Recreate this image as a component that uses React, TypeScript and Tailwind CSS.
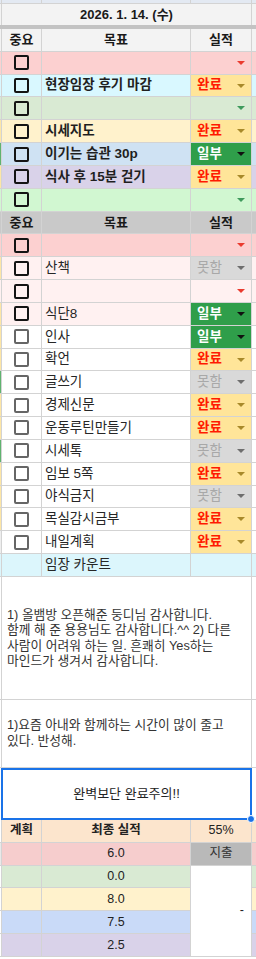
import React from 'react';

type Mark = 'done' | 'part' | 'miss' | 'red' | 'green' | 'none';

type Goal = {
  text: string;
  bg: string;
  edge: string;
  box: 'dark' | 'gray' | 'none';
  mark: Mark;
};

const FONT = "font-['Liberation_Sans','Noto_Sans_CJK_KR',sans-serif]";

const firstGoals: Goal[] = [
  { text: '', bg: 'bg-[#fcd0d0]', edge: 'bg-[#fcd0d0]', box: 'dark', mark: 'red' },
  { text: '현장임장 후기 마감', bg: 'bg-[#d9f8ff]', edge: 'bg-[#d9f8ff]', box: 'dark', mark: 'done' },
  { text: '', bg: 'bg-[#d9ead3]', edge: 'bg-[#d9ead3]', box: 'dark', mark: 'green' },
  { text: '시세지도', bg: 'bg-[#fff2cc]', edge: 'bg-[#fde6a6]', box: 'dark', mark: 'done' },
  { text: '이기는 습관 30p', bg: 'bg-[#cfe2f3]', edge: 'bg-[#5fb36f]', box: 'dark', mark: 'part' },
  { text: '식사 후 15분 걷기', bg: 'bg-[#d9d2e9]', edge: 'bg-[#fde6a6]', box: 'dark', mark: 'done' },
  { text: '', bg: 'bg-[#d1f7d1]', edge: 'bg-[#d1f7d1]', box: 'dark', mark: 'green' },
];

const secondGoals: Goal[] = [
  { text: '', bg: 'bg-[#fcd0d0]', edge: 'bg-[#fcd0d0]', box: 'dark', mark: 'red' },
  { text: '산책', bg: 'bg-[#fff1f1]', edge: 'bg-[#fde6a6]', box: 'dark', mark: 'miss' },
  { text: '', bg: 'bg-[#fff1f1]', edge: 'bg-[#fff1f1]', box: 'dark', mark: 'red' },
  { text: '식단8', bg: 'bg-[#fff1f1]', edge: 'bg-[#fde6a6]', box: 'dark', mark: 'part' },
  { text: '인사', bg: 'bg-white', edge: 'bg-[#fde6a6]', box: 'gray', mark: 'part' },
  { text: '확언', bg: 'bg-white', edge: 'bg-[#fde6a6]', box: 'gray', mark: 'done' },
  { text: '글쓰기', bg: 'bg-white', edge: 'bg-[#5fb36f]', box: 'gray', mark: 'miss' },
  { text: '경제신문', bg: 'bg-white', edge: 'bg-[#fde6a6]', box: 'gray', mark: 'done' },
  { text: '운동루틴만들기', bg: 'bg-white', edge: 'bg-[#fde6a6]', box: 'gray', mark: 'done' },
  { text: '시세톡', bg: 'bg-white', edge: 'bg-[#5fb36f]', box: 'gray', mark: 'miss' },
  { text: '임보 5쪽', bg: 'bg-white', edge: 'bg-[#fde6a6]', box: 'gray', mark: 'done' },
  { text: '야식금지', bg: 'bg-white', edge: 'bg-[#fde6a6]', box: 'gray', mark: 'miss' },
  { text: '목실감시금부', bg: 'bg-white', edge: 'bg-[#fde6a6]', box: 'gray', mark: 'done' },
  { text: '내일계획', bg: 'bg-white', edge: 'bg-[#eeeeee]', box: 'gray', mark: 'done' },
  { text: '임장 카운트', bg: 'bg-[#dcf6fc]', edge: 'bg-[#dcf6fc]', box: 'none', mark: 'none' },
];

const results = [
  { value: '6.0', bg: 'bg-[#f6cdcd]' },
  { value: '0.0', bg: 'bg-[#d9ead3]' },
  { value: '8.0', bg: 'bg-[#fff2cc]' },
  { value: '7.5', bg: 'bg-[#c9daf8]' },
  { value: '2.5', bg: 'bg-[#d9d2e9]' },
];

function Arrow({ color }: { color: string }) {
  return (
    <svg width="8" height="4" viewBox="0 0 8 4" className={color}>
      <path d="M0 0h8L4 4z" fill="currentColor" />
    </svg>
  );
}

function StatusCell({ mark, bg }: { mark: Mark; bg: string }) {
  const base = 'w-[61px] h-full border-r border-[#d3d3d3] flex items-center justify-between pl-[6px] pr-[6px]';
  if (mark === 'done') {
    return (
      <div className={`${base} bg-[#ffe599]`}>
        <span className="text-[13.5px] font-bold text-[#ff1a00]">완료</span>
        <Arrow color="text-[#a8892a]" />
      </div>
    );
  }
  if (mark === 'part') {
    return (
      <div className={`${base} bg-[#2f9e4a]`}>
        <span className="text-[13.5px] font-bold text-white">일부</span>
        <Arrow color="text-[#111111]" />
      </div>
    );
  }
  if (mark === 'miss') {
    return (
      <div className={`${base} bg-[#d9d9d9]`}>
        <span className="text-[13.5px] text-[#a8a8a8]">못함</span>
        <Arrow color="text-[#6e6e6e]" />
      </div>
    );
  }
  if (mark === 'red') {
    return (
      <div className={`${base} ${bg} justify-end`}>
        <Arrow color="text-[#ea3b2e]" />
      </div>
    );
  }
  if (mark === 'green') {
    return (
      <div className={`${base} ${bg} justify-end`}>
        <Arrow color="text-[#3f9a5c]" />
      </div>
    );
  }
  return <div className={`${base} ${bg}`} />;
}

function GoalRow({ goal, bold }: { goal: Goal; bold: boolean }) {
  return (
    <div className="flex h-[22.83px] border-b border-[#d3d3d3]">
      <div className={`w-[1px] h-full ${goal.edge}`} />
      <div className={`w-[41px] h-full border-x border-[#d3d3d3] flex items-center justify-center ${goal.bg}`}>
        {goal.box === 'dark' && <div className="w-[15px] h-[15px] border-[2.5px] border-[#141414] rounded-[2px]" />}
        {goal.box === 'gray' && <div className="w-[15px] h-[15px] border-2 border-[#666666] rounded-[2px]" />}
      </div>
      <div className={`w-[149px] h-full border-r border-[#d3d3d3] flex items-center pl-[3px] text-[13.5px] ${goal.bg} ${bold ? 'font-bold text-[#1f1f1f]' : 'text-[#262626]'}`}>
        {goal.text}
      </div>
      <StatusCell mark={goal.mark} bg={goal.bg} />
      <div className={`w-[4px] h-full ${goal.bg}`} />
    </div>
  );
}

function HeaderRow({ bg }: { bg: string }) {
  return (
    <div className="flex h-[22.83px] border-b border-[#d3d3d3] text-[13px] font-bold text-[#1a1a1a]">
      <div className={`w-[1px] h-full ${bg}`} />
      <div className={`w-[41px] h-full border-x border-[#d3d3d3] flex items-center justify-center ${bg}`}>중요</div>
      <div className={`w-[149px] h-full border-r border-[#d3d3d3] flex items-center justify-center ${bg}`}>목표</div>
      <div className={`w-[61px] h-full border-r border-[#d3d3d3] flex items-center justify-center ${bg}`}>실적</div>
      <div className={`w-[4px] h-full ${bg}`} />
    </div>
  );
}

export default function App() {
  return (
    <div className={`w-[256px] h-[959px] bg-white overflow-hidden ${FONT}`}>
      {/* previous row peeking in */}
      <div className="flex h-[4px] border-b border-[#d3d3d3] bg-[#e3e9f2]">
        <div className="w-[1px]" />
        <div className="w-[41px] border-x border-[#d3d3d3]" />
        <div className="w-[149px] border-r border-[#d3d3d3]" />
        <div className="w-[61px] border-r border-[#d3d3d3]" />
        <div className="w-[4px]" />
      </div>

      {/* date */}
      <div className="flex h-[21px] bg-[#f3f3f3]">
        <div className="w-[1px]" />
        <div className="w-[251px] border-x border-[#d3d3d3] flex items-center justify-center text-[13px] font-bold text-[#1a1a1a]">
          2026. 1. 14. (수)
        </div>
        <div className="w-[4px]" />
      </div>
      <div className="h-[4px] bg-[#c3c3c3]" />

      <HeaderRow bg="bg-[#f3f3f3]" />
      {firstGoals.map((g, i) => (
        <GoalRow key={i} goal={g} bold />
      ))}

      <HeaderRow bg="bg-[#c9c9c9]" />
      {secondGoals.map((g, i) => (
        <GoalRow key={i} goal={g} bold={false} />
      ))}

      {/* gratitude notes */}
      <div className="flex h-[123px] border-b border-[#d3d3d3]">
        <div className="w-[1px]" />
        <div className="w-[251px] border-x border-[#d3d3d3] flex flex-col justify-center pl-[5px] text-[12.75px] leading-[15.5px] text-[#333333]">
          <span>1) 올뱀방 오픈해준 둥디님 감사합니다.</span>
          <span>함께 해 준 용용님도 감사합니다.^^ 2) 다른</span>
          <span>사람이 어려워 하는 일. 흔쾌히 Yes하는</span>
          <span>마인드가 생겨서 감사합니다.</span>
        </div>
        <div className="w-[4px]" />
      </div>
      <div className="flex h-[68px] border-b border-[#d3d3d3]">
        <div className="w-[1px]" />
        <div className="w-[251px] border-x border-[#d3d3d3] flex flex-col justify-center pl-[5px] text-[12.75px] leading-[16px] text-[#333333]">
          <span>1)요즘 아내와 함께하는 시간이 많이 줄고</span>
          <span>있다. 반성해.</span>
        </div>
        <div className="w-[4px]" />
      </div>

      {/* motto (selected cell) */}
      <div className="flex h-[52px]">
        <div className="w-[1px]" />
        <div className="relative w-[251px] border-2 border-[#1a73e8] flex items-center justify-center text-[13px] text-[#222222]">
          완벽보단 완료주의!!
          <div className="absolute -right-[5px] -bottom-[5px] w-[8px] h-[8px] rounded-full bg-[#1a73e8] border border-white" />
        </div>
        <div className="w-[4px]" />
      </div>

      {/* final results */}
      <div className="grid grid-cols-[1px_41px_149px_61px_4px] text-[12.5px] text-[#222222]">
        <div className="h-[22.83px] border-b border-[#d3d3d3] bg-white" />
        <div className="h-[22.83px] border-x border-b border-[#d3d3d3] bg-[#fce5cd] flex items-center justify-center font-bold">계획</div>
        <div className="h-[22.83px] border-r border-b border-[#d3d3d3] bg-[#fce5cd] flex items-center justify-center font-bold">최종 실적</div>
        <div className="h-[22.83px] border-r border-b border-[#d3d3d3] bg-[#fce5cd] flex items-center justify-center">55%</div>
        <div className="h-[22.83px] border-b border-[#d3d3d3] bg-[#fce5cd]" />

        <div className="h-[22.83px] border-b border-[#d3d3d3] bg-[#e9e9e9]" />
        <div className={`h-[22.83px] border-x border-b border-[#d3d3d3] ${results[0].bg}`} />
        <div className={`h-[22.83px] border-r border-b border-[#d3d3d3] flex items-center justify-center ${results[0].bg}`}>{results[0].value}</div>
        <div className="h-[22.83px] border-r border-b border-[#d3d3d3] bg-[#b9b9b9] flex items-center justify-center text-[#333333]">지출</div>
        <div className={`h-[22.83px] border-b border-[#d3d3d3] ${results[0].bg}`} />

        {results.slice(1).map((r, i) => (
          <React.Fragment key={r.value}>
            <div className="h-[22.83px] border-b border-[#d3d3d3] bg-white" />
            <div className={`h-[22.83px] border-x border-b border-[#d3d3d3] ${r.bg}`} />
            <div className={`h-[22.83px] border-r border-b border-[#d3d3d3] flex items-center justify-center ${r.bg}`}>{r.value}</div>
            {i === 0 && (
              <div className="row-span-4 border-r border-b border-[#d3d3d3] bg-white flex items-center justify-end pr-[7px]">-</div>
            )}
            <div className={`h-[22.83px] border-b border-[#d3d3d3] ${r.bg}`} />
          </React.Fragment>
        ))}
      </div>
    </div>
  );
}
